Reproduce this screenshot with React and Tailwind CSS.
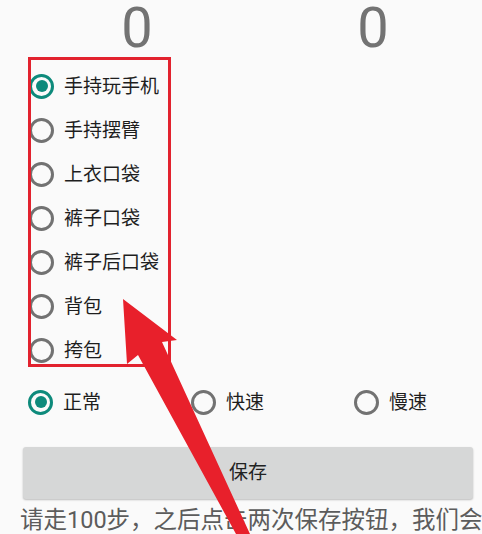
import { useState } from 'react'

const modes = ['手持玩手机', '手持摆臂', '上衣口袋', '裤子口袋', '裤子后口袋', '背包', '挎包']
const speeds = ['正常', '快速', '慢速']

function Radio({ checked }) {
  return (
    <span
      className={`flex items-center justify-center w-[25px] h-[25px] rounded-full border-[3px] shrink-0 ${
        checked ? 'border-[#0d8a7b]' : 'border-[#727272]'
      }`}
    >
      {checked && <span className="w-[12px] h-[12px] rounded-full bg-[#0d8a7b]" />}
    </span>
  )
}

export default function App() {
  const [mode, setMode] = useState(0)
  const [speed, setSpeed] = useState(0)

  return (
    <div className='relative w-[482px] h-[534px] overflow-hidden bg-[#fafafa] font-["Roboto","Noto_Sans_CJK_SC",sans-serif]'>
      {/* step counters */}
      <div className="grid grid-cols-[236px_236px] pl-[19px] h-[56px]">
        <div className="text-center text-[56px] leading-none text-[#737373]">0</div>
        <div className="text-center text-[56px] leading-none text-[#737373]">0</div>
      </div>

      {/* carry position */}
      <div className="mt-[8px] flex flex-col">
        {modes.map((m, i) => (
          <button
            key={m}
            onClick={() => setMode(i)}
            className="flex items-center gap-[10px] h-[44px] pl-[29px] text-left"
          >
            <Radio checked={mode === i} />
            <span className="text-[19px] leading-none text-[#1e1e1e]">{m}</span>
          </button>
        ))}
      </div>

      {/* walking speed */}
      <div className="mt-[8px] grid grid-cols-[163px_163px_163px] pl-[28px] h-[44px]">
        {speeds.map((s, i) => (
          <button key={s} onClick={() => setSpeed(i)} className="flex items-center gap-[10px] text-left">
            <Radio checked={speed === i} />
            <span className="text-[19px] leading-none text-[#1e1e1e]">{s}</span>
          </button>
        ))}
      </div>

      <div className="mt-[23px] pl-[23px] pr-[9px]">
        <button className="w-full h-[52px] rounded-[3px] bg-[#d6d7d7] shadow-[0_1px_2px_rgba(0,0,0,0.25)] text-[19px] text-[#222222]">
          保存
        </button>
      </div>

      <p className="mt-[9px] pl-[20px] text-[23.5px] leading-[24px] text-[#5c5c5c] whitespace-nowrap">
        请走100步，之后点击两次保存按钮，我们会
      </p>

      {/* annotation overlay */}
      <div className="absolute left-[28px] top-[57px] w-[143px] h-[310px] border-[3px] border-[#e2222e] pointer-events-none" />
      <svg className="absolute inset-0 pointer-events-none" width="482" height="534" viewBox="0 0 482 534">
        <polygon
          points="123,299 177,340 162,342 250,534 236,534 138,355 127,364"
          fill="#e8202b"
        />
      </svg>
    </div>
  )
}
